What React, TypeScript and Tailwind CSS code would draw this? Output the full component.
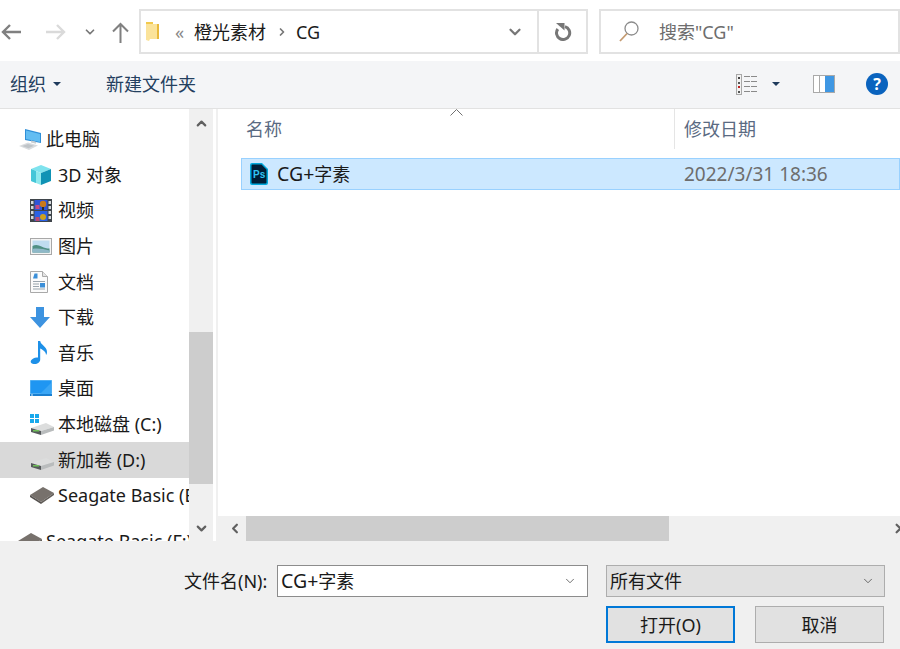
import { ChevronDown, ChevronLeft, ChevronRight, ChevronUp } from 'lucide-react';
import type { ReactNode } from 'react';

const font = { fontFamily: '"Noto Sans", "Noto Sans CJK SC", sans-serif' };

function Pc() {
  return (
    <svg width="26" height="23" viewBox="0 0 26 23">
      <path d="M7 1l16 4v10L7 12z" fill="#2f8fd8" />
      <path d="M8 2.500l14 3.500v8L8 11z" fill="#63bdf2" />
      <path d="M13 12.500l5 1.200v2l-5-1.200z" fill="#c9ced2" />
      <path d="M1 18l9-3.500 10 3-9 4.500z" fill="#d9dcdf" />
      <path d="M4 18l6-2 6 1.800-5.500 2.400z" fill="#bfc4c8" />
    </svg>
  );
}

function Cube() {
  return (
    <svg width="22" height="22" viewBox="0 0 22 22">
      <path d="M11 1l10 4-10 4L1 5z" fill="#7fe3ee" />
      <path d="M1 5l10 4v12L1 17z" fill="#8fe9ee" />
      <path d="M1 5l5 2v12l-5-2z" fill="#45c6d8" />
      <path d="M21 5l-10 4v12l10-4z" fill="#0f93b5" />
    </svg>
  );
}

function Film() {
  return (
    <svg width="22" height="23" viewBox="0 0 22 23">
      <rect width="22" height="23" fill="#3f454b" />
      <rect x="4.500" y="1" width="13" height="10" fill="#2f55d8" />
      <rect x="4.500" y="12" width="13" height="10" fill="#2a62e6" />
      <circle cx="13" cy="5" r="3.200" fill="#c9791c" />
      <rect x="5.500" y="6" width="4" height="4" fill="#c64a82" />
      <rect x="12" y="8" width="2" height="3" fill="#2a2a2a" />
      <circle cx="13" cy="18" r="3" fill="#cfa21e" />
      <rect x="5.500" y="18" width="4" height="4" fill="#b84a72" />
      <g fill="#d5d9dc">
        <rect x="1" y="2" width="2.500" height="3" />
        <rect x="1" y="7" width="2.500" height="3" />
        <rect x="1" y="12" width="2.500" height="3" />
        <rect x="1" y="17" width="2.500" height="3" />
        <rect x="18.500" y="2" width="2.500" height="3" />
        <rect x="18.500" y="7" width="2.500" height="3" />
        <rect x="18.500" y="12" width="2.500" height="3" />
        <rect x="18.500" y="17" width="2.500" height="3" />
      </g>
    </svg>
  );
}

function Picture() {
  return (
    <svg width="22" height="17" viewBox="0 0 22 17">
      <rect x="0.500" y="0.500" width="21" height="16" fill="#f4f4f4" stroke="#a8a8a8" />
      <rect x="2.500" y="2.500" width="17" height="12" fill="#bfdcf0" />
      <path d="M2.500 8c3-1.500 6-1 9 .5s5 2 8 2v4h-17z" fill="#4f8f84" />
      <path d="M2.500 11c5-1 11 0 17 1.500v2h-17z" fill="#8fb8c8" />
    </svg>
  );
}

function Doc() {
  return (
    <svg width="18" height="22" viewBox="0 0 18 22">
      <path d="M.5.5h12l5 5v16H.5z" fill="#fbfbfb" stroke="#a9a9a9" />
      <path d="M12.500.5v5h5" fill="#e4e4e4" stroke="#a9a9a9" />
      <path d="M4.500 2.500h3v5h-4.500z" fill="#3b8fd8" />
      <g fill="#9aa5ae">
        <rect x="3" y="10" width="12" height="1" />
        <rect x="3" y="12.500" width="6" height="1" />
        <rect x="3" y="15" width="6" height="1" />
        <rect x="3" y="17.500" width="12" height="1" />
      </g>
      <rect x="10" y="12" width="5" height="4.500" fill="#3b8fd8" />
    </svg>
  );
}

function Download() {
  return (
    <svg width="20" height="21" viewBox="0 0 20 21">
      <path d="M6 0h8v10h6L10 21 0 10h6z" fill="#3d93e0" />
    </svg>
  );
}

function Music() {
  return (
    <svg width="18" height="23" viewBox="0 0 18 23">
      <path d="M8 0h2.200c.6 4 6.800 5.500 6.800 11 0 1.500-.5 2.500-1 3 .2-3-2.800-5-5.800-6.500V18.500c0 2.500-2.500 4.500-5.500 4.500S0 21.500 1 19.500 5 16 8 16.500z" fill="#1e90e8" />
    </svg>
  );
}

function Desktop() {
  return (
    <svg width="22" height="16" viewBox="0 0 22 16">
      <rect width="22" height="16" fill="#7cc4f4" />
      <rect x="0.500" y="0.500" width="21" height="13" fill="#1f96f2" />
      <path d="M10 14L21 3v11z" fill="#3aa6f5" />
      <rect x="0" y="14" width="22" height="2" fill="#1a7fd0" />
      <rect x="1" y="14.500" width="2" height="1" fill="#d8eefc" />
    </svg>
  );
}

function Disk({ win }: { win?: boolean }) {
  return (
    <svg width="24" height="21" viewBox="0 0 24 21">
      {win && (
        <g fill="#19a9ec">
          <rect x="0" y="0" width="4" height="4" />
          <rect x="5" y="0" width="4" height="4" />
          <rect x="0" y="5" width="4" height="4" />
          <rect x="5" y="5" width="4" height="4" />
        </g>
      )}
      <path d="M1 14l15-5 8 4-13 4z" fill="#dcdddd" />
      <path d="M1 14l10 3v4L1 18z" fill="#55595b" />
      <path d="M11 17l13-4v3.500L11 21z" fill="#b9bcbd" />
      <rect x="3" y="16" width="6" height="1.500" fill="#6fbf58" />
    </svg>
  );
}

function Seagate() {
  return (
    <svg width="24" height="18" viewBox="0 0 24 18">
      <path d="M0 9l13-8 11 6-13 9z" fill="#77716c" />
      <path d="M0 9l11 7v2L0 11z" fill="#56524f" />
      <path d="M24 7l-13 9v2l13-9z" fill="#625d59" />
    </svg>
  );
}

function PsIcon() {
  return (
    <svg width="18" height="22" viewBox="0 0 18 22">
      <path d="M0 2a2 2 0 012-2h10l6 6v14a2 2 0 01-2 2H2a2 2 0 01-2-2z" fill="#00a8dc" />
      <path d="M1.500 2.500a1 1 0 011-1h9l5 5v13a1 1 0 01-1 1h-13a1 1 0 01-1-1z" fill="#001e36" />
      <text x="3" y="15" fontSize="10" fontWeight="700" fontFamily="Liberation Sans" fill="#31c5f5">Ps</text>
    </svg>
  );
}

function FolderIcon() {
  return (
    <svg width="14" height="21" viewBox="0 0 14 21">
      <path d="M0 1h7v2h6v15H0z" fill="#f2c94c" />
      <path d="M0 3h13v15H4l-1 2-3-1z" fill="#fbe39a" />
      <rect x="11" y="3" width="2" height="15" fill="#e8b93c" />
    </svg>
  );
}

function ViewIcon() {
  return (
    <svg width="21" height="21" viewBox="0 0 21 21">
      <rect x="0.500" y="0.500" width="5" height="20" fill="#f2f2f2" stroke="#a8a8a8" />
      <rect x="2" y="3" width="2" height="2" fill="#444" />
      <rect x="2" y="8" width="2" height="2" fill="#555" />
      <rect x="2" y="12" width="2" height="2" fill="#c02020" />
      <rect x="2" y="17" width="2" height="2" fill="#555" />
      <g fill="#8a8a8a">
        <rect x="8" y="2" width="6" height="1" />
        <rect x="15" y="2" width="6" height="1" />
        <rect x="8" y="7" width="6" height="1" />
        <rect x="15" y="7" width="6" height="1" />
        <rect x="8" y="12" width="6" height="1" />
        <rect x="15" y="12" width="6" height="1" />
        <rect x="8" y="17" width="6" height="1" />
        <rect x="15" y="17" width="6" height="1" />
      </g>
    </svg>
  );
}

function PaneIcon() {
  return (
    <svg width="22" height="18" viewBox="0 0 22 18">
      <rect x="0.500" y="0.500" width="21" height="17" fill="#fff" stroke="#a9a9a9" />
      <rect x="12" y="1" width="9" height="16" fill="#3f97e3" />
      <rect x="6" y="1" width="1" height="16" fill="#a9a9a9" />
    </svg>
  );
}

function HArrow({ color, flip }: { color: string; flip?: boolean }) {
  return (
    <svg width="20" height="16" viewBox="0 0 20 16" className={flip ? '-scale-x-100' : ''}>
      <path d="M20 8H2M9 1L2 8l7 7" fill="none" stroke={color} strokeWidth="2.400" />
    </svg>
  );
}

function UpArrow() {
  return (
    <svg width="17" height="21" viewBox="0 0 17 21">
      <path d="M8.500 21V2M1 9.500L8.500 2 16 9.500" fill="none" stroke="#808080" strokeWidth="2" />
    </svg>
  );
}

function Refresh() {
  return (
    <svg width="18" height="18" viewBox="0 0 18 18">
      <path d="M11 3.600A6.600 6.600 0 1 1 3.800 6" fill="none" stroke="#777" strokeWidth="3" />
      <path d="M2 0h8.500v7.500z" fill="#777" />
    </svg>
  );
}

function SearchIcon() {
  return (
    <svg width="20" height="21" viewBox="0 0 20 21">
      <circle cx="12.500" cy="7.500" r="6.500" fill="none" stroke="#8c8c8c" strokeWidth="1.300" />
      <path d="M8 12.500L1 20" fill="none" stroke="#c49a70" strokeWidth="1.800" />
    </svg>
  );
}

function Caret() {
  return <span className="inline-block border-x-[4px] border-t-[4px] border-x-transparent border-t-[#1f3a5c]" />;
}

const items: { label: string; icon: ReactNode; selected?: boolean; top?: boolean }[] = [
  { label: '此电脑', icon: <Pc />, top: true },
  { label: '3D 对象', icon: <Cube /> },
  { label: '视频', icon: <Film /> },
  { label: '图片', icon: <Picture /> },
  { label: '文档', icon: <Doc /> },
  { label: '下载', icon: <Download /> },
  { label: '音乐', icon: <Music /> },
  { label: '桌面', icon: <Desktop /> },
  { label: '本地磁盘 (C:)', icon: <Disk win /> },
  { label: '新加卷 (D:)', icon: <Disk />, selected: true },
  { label: 'Seagate Basic (E:)', icon: <Seagate /> },
];

export default function App() {
  return (
    <div className="flex h-[649px] w-[900px] flex-col overflow-hidden bg-white text-[18px] leading-none text-[#1a1a1a]" style={font}>
      {/* address row */}
      <div className="flex h-[61px] shrink-0 items-start pt-[9px]">
        <div className="flex h-[45px] w-[139px] items-center pt-[1px]">
          <div className="ml-[1px]"><HArrow color="#808080" /></div>
          <div className="ml-[25px]"><HArrow color="#dadada" flip /></div>
          <ChevronDown size={14} strokeWidth={3} className="ml-[17px] text-[#777]" />
          <div className="ml-[15px]"><UpArrow /></div>
        </div>
        <div className="flex h-[45px] w-[449px] items-center border-2 border-[#e2e2e2]">
          <div className="ml-[5px] w-[15px]">
            <FolderIcon />
          </div>
          <span className="ml-[14px] w-[9px] text-[#888]">«</span>
          <span className="ml-[10px]">橙光素材</span>
          <ChevronRight size={12} strokeWidth={3.500} className="ml-[10px] text-[#777]" />
          <span className="ml-[8px]">CG</span>
          <div className="flex-1" />
          <ChevronDown size={18} strokeWidth={3} className="mr-[13px] text-[#777]" />
          <div className="flex h-full w-[49px] items-center justify-center border-l-2 border-[#e2e2e2]">
            <Refresh />
          </div>
        </div>
        <div className="ml-[11px] flex h-[45px] w-[301px] items-center border-2 border-[#e2e2e2]">
          <div className="ml-[18px] flex"><SearchIcon /></div>
          <span className="ml-[20px] text-[#6d6d6d]">搜索"CG"</span>
        </div>
      </div>

      {/* toolbar */}
      <div className="flex h-[48px] shrink-0 items-center border-b border-[#e2e2e2] bg-[#f4f5f7] pb-[1px] text-[#24405f]">
        <span className="ml-[10px]">组织</span>
        <span className="ml-[7px] flex"><Caret /></span>
        <span className="ml-[45px]">新建文件夹</span>
        <div className="flex-1" />
        <ViewIcon />
        <span className="ml-[15px] flex"><Caret /></span>
        <span className="ml-[33px] flex"><PaneIcon /></span>
        <span className="ml-[31px] mr-[12px] flex h-[22px] w-[22px] items-center justify-center rounded-full bg-[#0a63be] text-[16px] font-bold text-white">?</span>
      </div>

      {/* main */}
      <div className="flex h-[432px] shrink-0">
        <div className="h-full w-[189px] shrink-0 overflow-hidden pt-[13px]">
          {items.map((item) => (
            <div
              key={item.label}
              className={`flex h-[35.600px] items-center whitespace-nowrap pb-[1px] ${item.selected ? 'bg-[#d9d9d9]' : ''} ${item.top ? 'pl-[18px]' : 'pl-[30px]'}`}
            >
              <div className="flex w-[28px] shrink-0 items-center">{item.icon}</div>
              <span>{item.label}</span>
            </div>
          ))}
          <div className="mt-[10px] flex h-[35.600px] items-center whitespace-nowrap pl-[18px]">
            <div className="flex w-[28px] shrink-0 items-center"><Seagate /></div>
            <span>Seagate Basic (F:)</span>
          </div>
        </div>

        <div className="flex h-full w-[24px] shrink-0 flex-col items-center bg-[#f0f0f0] text-[#606060]">
          <div className="flex h-[28px] items-center"><ChevronUp size={15} strokeWidth={3.500} /></div>
          <div className="mt-[195px] h-[152px] w-full bg-[#cdcdcd]" />
          <div className="flex flex-1 items-end pb-[5px]"><ChevronDown size={15} strokeWidth={3.500} /></div>
        </div>

        <div className="ml-[3px] w-[2px] shrink-0 bg-[#f0f0f0]" />

        <div className="flex min-w-0 flex-1 flex-col">
          <div className="flex-1 pl-[23px]">
            <div className="relative flex h-[40px] text-[#5a6a82]">
              <svg width="13" height="7" viewBox="0 0 13 7" className="absolute left-[209px] top-0">
                <path d="M.5 6.500L6.500.5l6 6" fill="none" stroke="#707070" />
              </svg>
              <div className="flex w-[433px] items-center pb-[1px] pl-[5px]">名称</div>
              <div className="flex items-center border-l border-[#e5e5e5] pb-[1px] pl-[9px]">修改日期</div>
            </div>
            <div className="mt-[9px] flex h-[32px] items-center border border-[#99d1ff] bg-[#cce8ff]">
              <div className="ml-[8px] w-[27px]"><PsIcon /></div>
              <span className="w-[407px]"><span className="text-[19.500px]">CG+</span>字素</span>
              <span className="text-[19px] text-[#6d6d6d]">2022/3/31 18:36</span>
            </div>
          </div>
          <div className="flex h-[25px] shrink-0 items-center overflow-hidden bg-[#f0f0f0] text-[#606060]">
            <ChevronLeft size={15} strokeWidth={3.500} className="ml-[6px] w-[22px] shrink-0" />
            <div className="h-full w-[423px] shrink-0 bg-[#cdcdcd]" />
            <ChevronRight size={15} strokeWidth={3.500} className="ml-[222px] shrink-0" />
          </div>
        </div>
      </div>

      {/* footer */}
      <div className="flex-1 bg-[#f0f0f0] text-[#1a1a1a]">
        <div className="flex items-center pt-[24px]">
          <span className="ml-[184px] w-[93px]">文件名(N):</span>
          <div className="flex h-[32px] w-[311px] items-center justify-between border border-[#8c8c8c] bg-white pl-[3px] pr-[10px]">
            <span><span className="text-[19.500px]">CG+</span>字素</span>
            <ChevronDown size={14} strokeWidth={1.300} className="text-[#444]" />
          </div>
          <div className="ml-[18px] flex h-[32px] w-[279px] items-center justify-between border border-[#adadad] bg-[#e1e1e1] pl-[3px] pr-[9px]">
            <span>所有文件</span>
            <ChevronDown size={14} strokeWidth={1.300} className="text-[#444]" />
          </div>
        </div>
        <div className="mt-[9px] flex pl-[606px]">
          <button className="h-[37px] w-[129px] border-2 border-[#0078d7] bg-[#e1e1e1]">打开(O)</button>
          <button className="ml-[20px] h-[37px] w-[129px] border border-[#adadad] bg-[#e1e1e1]">取消</button>
        </div>
      </div>
    </div>
  );
}
